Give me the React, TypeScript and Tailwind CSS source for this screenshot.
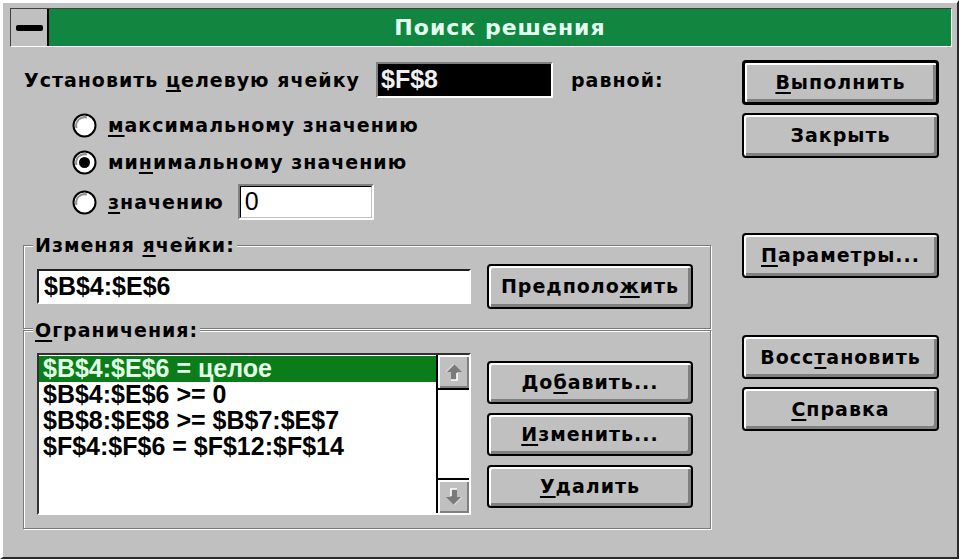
import type { ReactNode } from "react";

const ui = "font-['DejaVu_Sans',sans-serif] font-bold text-black";
const mono = "font-['Liberation_Sans',Arial,sans-serif] font-bold";

function U({ children }: { children: ReactNode }) {
    return <span className="underline decoration-2 underline-offset-[3px]">{children}</span>;
}

function Btn({ children, h = "h-[44px]", def = false, className = "" }: { children: ReactNode; h?: string; def?: boolean; className?: string }) {
    return (
        <div
            className={`${h} ${def ? "border-[3px]" : "border-2"} flex items-center justify-center rounded-[4px] border-black bg-[#c0c0c0] shadow-[inset_2px_2px_0_#ffffff,inset_-3px_-3px_0_#808080] ${ui} text-[19px] tracking-[1px] ${className}`}
        >
            <span>{children}</span>
        </div>
    );
}

function Radio({ checked = false }: { checked?: boolean }) {
    return (
        <svg width="25" height="25" viewBox="0 0 25 25" className="shrink-0">
            <circle cx="12.5" cy="12.5" r="11" fill="#ffffff" stroke="#000000" strokeWidth="2" />
            <path d="M4.5 15 A8.5 8.5 0 0 1 15 4.5" fill="none" stroke="#909090" strokeWidth="2" />
            {checked && <circle cx="12.5" cy="12.5" r="5.5" fill="#000000" />}
        </svg>
    );
}

function Arrow({ down = false }: { down?: boolean }) {
    return (
        <div className="flex h-[33px] items-center justify-center bg-[#c0c0c0] shadow-[inset_2px_2px_0_#ffffff,inset_-2px_-2px_0_#808080]">
            <svg width="22" height="22" viewBox="0 0 22 22" className={down ? "rotate-180" : ""}>
                <polygon points="11,3 19,11 14,11 14,19 8,19 8,11 3,11" fill="#7a7a7a" />
                <polyline points="14,12 14,19 8,19" fill="none" stroke="#ffffff" strokeWidth="1.6" />
                <polyline points="3,11 11,3" fill="none" stroke="#d8d8d8" strokeWidth="1.2" />
            </svg>
        </div>
    );
}

function Group({ label, className, children }: { label: ReactNode; className: string; children: ReactNode }) {
    return (
        <div className={`relative w-[688px] border border-[#7a7a7a] shadow-[inset_1px_1px_0_#ffffff,1px_1px_0_#ffffff] ${className}`}>
            <div className={`absolute left-[9px] top-[-13px] bg-[#c0c0c0] px-[2px] leading-[24px] ${ui} text-[19px] tracking-[1px]`}>
                {label}
            </div>
            {children}
        </div>
    );
}

const rows = ["$B$4:$E$6 = целое", "$B$4:$E$6 >= 0", "$B$8:$E$8 >= $B$7:$E$7", "$F$4:$F$6 = $F$12:$F$14"];

export default function App() {
    return (
        <div className="h-[560px] w-[962px] bg-white">
            <div className="h-[559px] w-[959px] border-l-[3px] border-t-[3px] border-r-2 border-b-2 border-l-white border-t-white border-r-[#2a2a2a] border-b-[#2a2a2a] bg-[#c0c0c0] pl-[7px] pr-[5px] pt-[5px]">
                {/* title bar */}
                <div className="flex h-[39px] w-[942px] border border-t-[#404040] border-l-[#404040] border-r-white border-b-white">
                    <div className="flex w-[38px] items-center justify-center border-r-2 border-black bg-[#c0c0c0]">
                        <div className="h-[6px] w-[27px] rounded-[2px] bg-black" />
                    </div>
                    <div className="flex flex-1 items-center justify-center bg-[#108640]">
                        <span className="font-['DejaVu_Sans',sans-serif] text-[22px] font-bold tracking-[1px] text-[#e4fff0]">Поиск решения</span>
                    </div>
                </div>

                <div className="flex pl-[13px]">
                    {/* left column */}
                    <div className="flex w-[689px] flex-col">
                        <div className="mt-[15px] flex h-[36px] items-center">
                            <div className={`w-[353px] pl-[1px] ${ui} text-[19px] tracking-[1px]`}>
                                Установить <U>ц</U>елевую ячейку
                            </div>
                            <div className="h-[36px] w-[177px] border-2 border-t-[#808080] border-l-[#808080] border-r-white border-b-white">
                                <div className={`flex h-full items-center border border-black bg-black pl-[2px] ${mono} text-[25px] text-[#f0f0f0]`}>$F$8</div>
                            </div>
                            <div className={`ml-[18px] ${ui} text-[19px] tracking-[1px]`}>равной:</div>
                        </div>

                        <div className="mt-[13px] flex h-[28px] items-center pl-[49px]">
                            <Radio />
                            <span className={`ml-[11px] ${ui} text-[19px] tracking-[1px]`}>
                                <U>м</U>аксимальному значению
                            </span>
                        </div>
                        <div className="mt-[9px] flex h-[28px] items-center pl-[49px]">
                            <Radio checked />
                            <span className={`ml-[11px] ${ui} text-[19px] tracking-[1px]`}>
                                ми<U>н</U>имальному значению
                            </span>
                        </div>
                        <div className="mt-[8px] flex h-[36px] items-center pl-[49px]">
                            <Radio />
                            <span className={`ml-[11px] ${ui} text-[19px] tracking-[1px]`}>
                                <U>з</U>начению
                            </span>
                            <div className="ml-[14px] h-[36px] w-[136px] border-2 border-t-[#808080] border-l-[#808080] border-r-white border-b-white">
                                <div className={`flex h-full items-center border border-b-[#c0c0c0] border-r-[#c0c0c0] border-t-black border-l-black bg-white pl-[4px] ${mono} text-[25px] font-normal`}>0</div>
                            </div>
                        </div>

                        <Group label={<>Изменяя <U>я</U>чейки:</>} className="mt-[25px] h-[84px]">
                            <div className="mt-[18px] flex h-[45px] items-center pl-[13px]">
                                <div className="h-[35px] w-[434px] border-2 border-t-[#202020] border-l-[#202020] border-r-white border-b-white bg-white">
                                    <div className={`flex h-full items-center pl-[5px] ${mono} text-[25px]`}>$B$4:$E$6</div>
                                </div>
                                <Btn h="h-[45px]" className="ml-[16px] w-[206px]">
                                    Предполо<U>ж</U>ить
                                </Btn>
                            </div>
                        </Group>

                        <Group label={<><U>О</U>граничения:</>} className="mt-[1px] h-[199px]">
                            <div className="mt-[22px] flex pl-[13px]">
                                <div className="flex h-[162px] w-[434px] border-2 border-t-[#303030] border-l-[#303030] border-r-white border-b-white">
                                    <div className="flex flex-1 flex-col bg-white pt-[1px]">
                                        {rows.map((r, i) => (
                                            <div
                                                key={r}
                                                className={`flex h-[26px] items-center pl-[4px] ${mono} text-[25px] ${i === 0 ? "bg-[#0a7d1a] text-[#e2ffe6]" : "text-black"}`}
                                            >
                                                {r}
                                            </div>
                                        ))}
                                    </div>
                                    <div className="flex w-[33px] flex-col justify-between border-l-2 border-black bg-white">
                                        <div className="border-b-2 border-black">
                                            <Arrow />
                                        </div>
                                        <div className="border-t-2 border-black">
                                            <Arrow down />
                                        </div>
                                    </div>
                                </div>
                                <div className="ml-[16px] mt-[8px] flex w-[206px] flex-col gap-[9px]">
                                    <Btn h="h-[43px]">
                                        До<U>б</U>авить...
                                    </Btn>
                                    <Btn h="h-[43px]">
                                        <U>И</U>зменить...
                                    </Btn>
                                    <Btn h="h-[43px]">
                                        <U>У</U>далить
                                    </Btn>
                                </div>
                            </div>
                        </Group>
                    </div>

                    {/* right column */}
                    <div className="ml-[30px] flex w-[197px] flex-col">
                        <Btn def h="h-[45px]" className="mt-[13px]">
                            <U>В</U>ыполнить
                        </Btn>
                        <Btn h="h-[45px]" className="mt-[8px]">
                            Закрыть
                        </Btn>
                        <Btn h="h-[45px]" className="mt-[75px]">
                            <U>П</U>араметры...
                        </Btn>
                        <Btn className="mt-[57px]">
                            Восс<U>т</U>ановить
                        </Btn>
                        <Btn className="mt-[8px]">
                            <U>С</U>правка
                        </Btn>
                    </div>
                </div>
            </div>
        </div>
    );
}
